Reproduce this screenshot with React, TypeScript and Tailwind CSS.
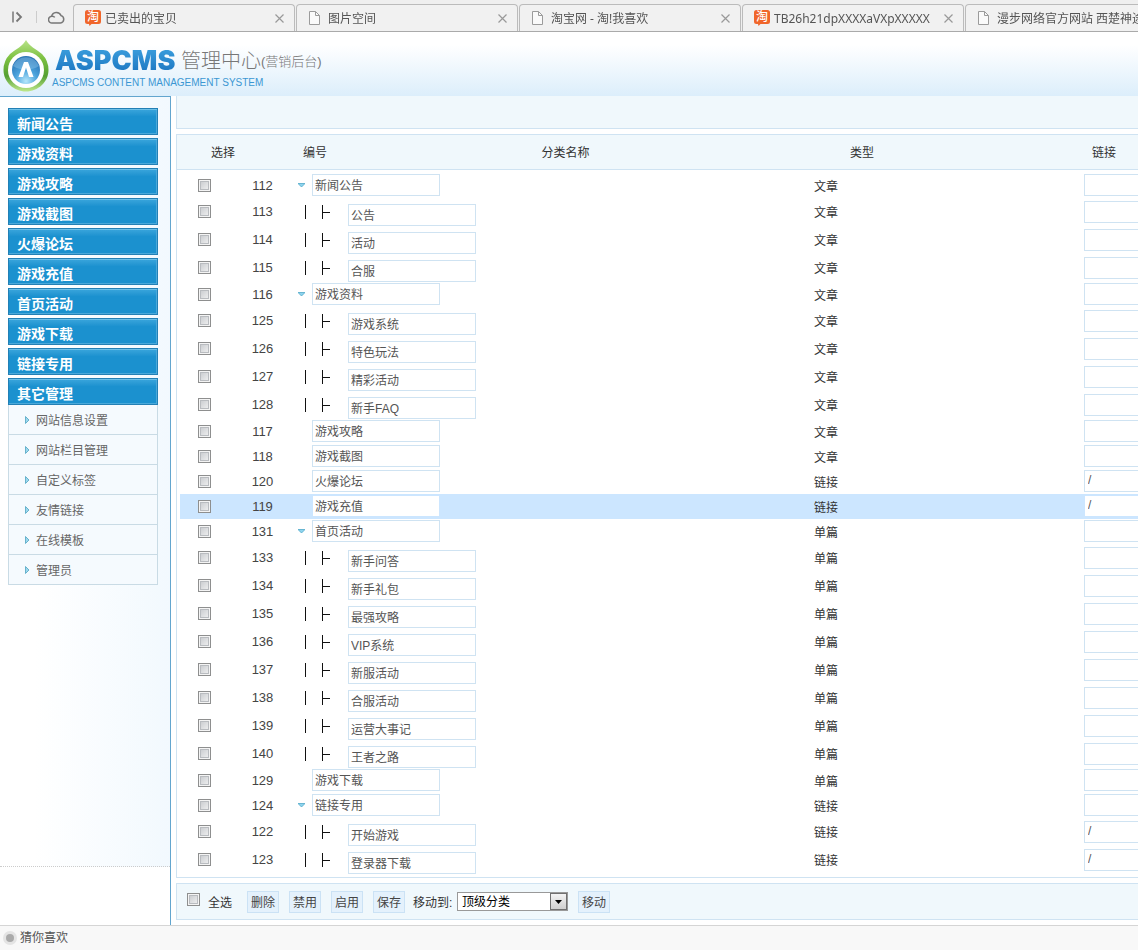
import clsx from "clsx";

interface ITab {
  title: string;
  icon: "tao" | "page";
}

interface ICategory {
  id: number;
  name: string;
  type: string;
  child?: boolean;
  open?: boolean;
  link?: string;
  active?: boolean;
}

const tabs: ITab[] = [
  { title: "已卖出的宝贝", icon: "tao" },
  { title: "图片空间", icon: "page" },
  { title: "淘宝网 - 淘!我喜欢", icon: "page" },
  { title: "TB26h21dpXXXXaVXpXXXXX", icon: "tao" },
  { title: "漫步网络官方网站 西楚神途", icon: "page" },
];

const menus = [
  "新闻公告",
  "游戏资料",
  "游戏攻略",
  "游戏截图",
  "火爆论坛",
  "游戏充值",
  "首页活动",
  "游戏下载",
  "链接专用",
  "其它管理",
];

const subMenus = [
  "网站信息设置",
  "网站栏目管理",
  "自定义标签",
  "友情链接",
  "在线模板",
  "管理员",
];

const categories: ICategory[] = [
  { id: 112, name: "新闻公告", type: "文章", open: true },
  { id: 113, name: "公告", type: "文章", child: true },
  { id: 114, name: "活动", type: "文章", child: true },
  { id: 115, name: "合服", type: "文章", child: true },
  { id: 116, name: "游戏资料", type: "文章", open: true },
  { id: 125, name: "游戏系统", type: "文章", child: true },
  { id: 126, name: "特色玩法", type: "文章", child: true },
  { id: 127, name: "精彩活动", type: "文章", child: true },
  { id: 128, name: "新手FAQ", type: "文章", child: true },
  { id: 117, name: "游戏攻略", type: "文章" },
  { id: 118, name: "游戏截图", type: "文章" },
  { id: 120, name: "火爆论坛", type: "链接", link: "/" },
  { id: 119, name: "游戏充值", type: "链接", link: "/", active: true },
  { id: 131, name: "首页活动", type: "单篇", open: true },
  { id: 133, name: "新手问答", type: "单篇", child: true },
  { id: 134, name: "新手礼包", type: "单篇", child: true },
  { id: 135, name: "最强攻略", type: "单篇", child: true },
  { id: 136, name: "VIP系统", type: "单篇", child: true },
  { id: 137, name: "新服活动", type: "单篇", child: true },
  { id: 138, name: "合服活动", type: "单篇", child: true },
  { id: 139, name: "运营大事记", type: "单篇", child: true },
  { id: 140, name: "王者之路", type: "单篇", child: true },
  { id: 129, name: "游戏下载", type: "单篇" },
  { id: 124, name: "链接专用", type: "链接", open: true },
  { id: 122, name: "开始游戏", type: "链接", child: true, link: "/" },
  { id: 123, name: "登录器下载", type: "链接", child: true, link: "/" },
];

function TaoIcon() {
  return (
    <span className="relative flex h-4 w-4 shrink-0 items-center justify-center">
      <svg className="absolute inset-0" width="16" height="16" viewBox="0 0 16 16">
        <path
          d="M2.500 0h11A2.500 2.500 0 0 1 16 2.500v9a2.500 2.500 0 0 1-2.500 2.500H6.500L4.500 16 4 14H2.500A2.500 2.500 0 0 1 0 11.500v-9A2.500 2.500 0 0 1 2.500 0z"
          fill="#f0662b"
        />
      </svg>
      <span className="relative -top-px text-[12px] leading-[14px] font-medium text-white">
        淘
      </span>
    </span>
  );
}

function PageIcon() {
  return (
    <svg className="mr-1 ml-px shrink-0" width="11" height="14" viewBox="0 0 11 14">
      <path d="M.5.5h6l4 4v9H.5z" fill="#fafafa" stroke="#9b9b9b" />
      <path d="M6.500.5v4h4" fill="none" stroke="#9b9b9b" />
    </svg>
  );
}

function BrowserTabs() {
  return (
    <nav
      aria-label="tabs"
      className="flex h-8 items-end overflow-hidden border-b border-[#aaa] bg-[#efefef] font-['Noto_Sans','Noto_Sans_CJK_SC',sans-serif]"
    >
      <div className="flex h-7 w-[73px] shrink-0 items-center pl-3">
        <button type="button" aria-label="展开">
          <svg width="11" height="12" viewBox="0 0 11 12" fill="none" stroke="#777">
            <path d="M1 .5v11" strokeWidth="1.500" />
            <path d="M4.500 1.500 9 6l-4.500 4.500" strokeWidth="1.800" />
          </svg>
        </button>
        <span className="ml-[13px] h-3 w-px bg-[#ccc]" />
        <button type="button" aria-label="云" className="ml-[11px]">
          <svg width="17" height="13" viewBox="0 0 17 13" fill="none" stroke="#777" strokeWidth="1.500">
            <path d="M4.200 12A3.300 3.300 0 0 1 3.600 5.300 4.900 4.900 0 0 1 13 4.600 3.800 3.800 0 0 1 12.500 12z" />
            <path d="M3.600 5.300c1.200-.3 2.400.1 3.200 1.100" />
          </svg>
        </button>
      </div>
      {tabs.map((tab) => (
        <div
          key={tab.title}
          className="mr-px flex h-[27px] w-[222px] shrink-0 items-center rounded-t border border-b-0 border-[#bbb] bg-[#f1f1f1] pr-[10px] pl-[11px]"
        >
          {tab.icon === "tao" ? <TaoIcon /> : <PageIcon />}
          <a
            href="#"
            className="ml-1 flex-1 overflow-hidden mask-r-from-94% pt-px text-[12px] leading-5 whitespace-nowrap text-[#555]"
          >
            {tab.title}
          </a>
          <button type="button" aria-label="关闭" className="ml-1">
            <svg width="9" height="9" viewBox="0 0 9 9" stroke="#999" strokeWidth="1.200">
              <path d="M.5.5l8 8M8.500.5l-8 8" />
            </svg>
          </button>
        </div>
      ))}
    </nav>
  );
}

function Logo() {
  return (
    <svg width="46" height="54" viewBox="0 0 46 54" aria-hidden="true">
      <defs>
        <linearGradient id="drop" x1="0" y1="0" x2="0" y2="1">
          <stop offset="0" stopColor="#b9e388" />
          <stop offset=".35" stopColor="#7cc142" />
          <stop offset=".7" stopColor="#55a033" />
          <stop offset="1" stopColor="#bfe88c" />
        </linearGradient>
        <radialGradient id="ball" cx=".5" cy=".9" r=".8">
          <stop offset="0" stopColor="#b4e6fb" />
          <stop offset=".5" stopColor="#4ba3dc" />
          <stop offset="1" stopColor="#2a75b6" />
        </radialGradient>
      </defs>
      <path
        d="M23 1C26 7 33 10 39 15A23 23 0 0 1 45.500 31C45.500 43 35 52.500 23 52.500S.5 43 .5 31A23 23 0 0 1 7 15C13 10 20 7 23 1z"
        fill="url(#drop)"
      />
      <circle cx="23" cy="31" r="18" fill="#fff" />
      <circle cx="23" cy="31" r="14" fill="url(#ball)" />
      <path d="M10 27a14 14 0 0 1 26 0c-8 5-18 5-26 0z" fill="#8cc6ec" opacity=".45" />
      <path d="M15.500 38 21 23h4l5.500 15h-4.500l-3-9.500-3 9.500z" fill="#fff" />
    </svg>
  );
}

function Banner() {
  return (
    <header className="flex h-16 bg-linear-to-b from-white from-20% to-[#dceefb] pt-[7px] pl-[3px]">
      <Logo />
      <div className="pt-[6px] pl-[3px]">
        <h1 className="flex h-[31px] items-center pl-[3px] leading-8 whitespace-nowrap">
          <span className="w-[126px] bg-linear-to-b from-[#3fa3e0] to-[#1670bd] bg-clip-text font-[Inter,sans-serif] text-[27px] leading-[32px] font-black text-transparent">
            ASPCMS
          </span>
          <span className="text-[20px] font-light text-[#777]">管理中心</span>
          <span className="pt-[3px] text-[13px] font-light text-[#777]">
            (营销后台)
          </span>
        </h1>
        <p className="text-[10px] leading-[14px] whitespace-nowrap text-[#3b97d3]">
          ASPCMS CONTENT MANAGEMENT SYSTEM
        </p>
      </div>
    </header>
  );
}

function Sidebar() {
  return (
    <aside className="w-[171px] shrink-0 border-t border-r border-[#62a5ce]">
      <div className="h-[770px] border-b border-dotted border-[#ccc] bg-linear-to-r from-white from-20% to-[#f2f9fe] pt-[11px] pl-2">
        <ul className="flex w-[150px] flex-col gap-[3px]">
          {menus.map((menu) => (
            <li key={menu}>
              <button
                type="button"
                className="block h-[27px] w-full border border-[#2380b5] bg-linear-to-b from-[#3aa6dc] to-[#1b91cf] to-30% pt-1 pl-2 text-left text-[14px] leading-5 font-bold text-white shadow-[inset_0_1px_0_#6cc0e8,inset_-1px_-1px_0_#4aa9da]"
              >
                {menu}
              </button>
            </li>
          ))}
        </ul>
        <ul className="w-[150px] border-x border-[#c9dbe5] bg-[#f5fafe]">
          {subMenus.map((item) => (
            <li key={item} className="h-[30px] border-b border-[#c9dbe5]">
              <a
                href="#"
                className="flex h-full items-center gap-[7px] pl-4 text-[12px] text-[#666]"
              >
                <svg width="4" height="8" viewBox="0 0 4 8">
                  <path d="M.5.5v7L4 4z" fill="#9bd8ee" stroke="#4fa3c2" strokeWidth=".8" />
                </svg>
                <span className="pt-[2px]">{item}</span>
              </a>
            </li>
          ))}
        </ul>
      </div>
    </aside>
  );
}

function Check({ label, id }: { label?: string; id?: string }) {
  return (
    <input
      type="checkbox"
      id={id}
      aria-label={label}
      className="block h-[13px] w-[13px] shrink-0 appearance-none border border-[#8e8f8f] bg-linear-to-br from-[#c3c6ca] to-[#f6f6f6] shadow-[inset_0_0_0_1px_#f4f4f4,inset_0_0_0_2px_#b9bcc0] checked:bg-[#4a90c4]"
    />
  );
}

function CategoryRow({ category }: { category: ICategory }) {
  const { id, name, type, child, open, link, active } = category;
  const border = active ? "border-[#cce6ff]" : "border-[#cfe3f2]";

  return (
    <tr
      className={clsx(
        "hover:bg-[#cce6ff]",
        child ? "h-[28px]" : "h-[25px]",
        active && "bg-[#cce6ff]",
      )}
    >
      <td className={clsx("pl-[18px] align-top", child ? "pt-[7px]" : "pt-[6px]")}>
        <Check label={`选择 ${id}`} />
      </td>
      <td className="text-center text-[13px] leading-5 text-[#444]">{id}</td>
      <td className="align-top">
        <div className={clsx("flex", child ? "h-[28px]" : "h-[25px]")}>
          {child ? (
            <svg className="mt-[7px] mr-[18px] ml-2" width="25" height="14" viewBox="0 0 25 14" stroke="#111">
              <path d="M.5 0v14M17.500 0v14M17.500 7.500h7.500" />
            </svg>
          ) : (
            <span className="w-[15px] pt-[10px] pl-px">
              {open && (
                <svg width="7" height="4" viewBox="0 0 7 4">
                  <path d="M0 .5h7L3.500 4z" fill="#8fd4ee" stroke="#4fa8c9" strokeWidth=".8" />
                </svg>
              )}
            </span>
          )}
          <input
            type="text"
            aria-label={`分类名称 ${id}`}
            defaultValue={name}
            className={clsx(
              "h-[22px] w-[128px] border bg-white px-[2px] pb-[2px] text-[12px] text-[#555]",
              child ? "mt-[6px]" : "mt-px",
              border,
            )}
          />
        </div>
      </td>
      <td className="pt-[2px] text-[12px] leading-5 text-[#333]">{type}</td>
      <td className={clsx("align-top", child ? "pt-[3px]" : "pt-px")}>
        <input
          type="text"
          aria-label={`链接 ${id}`}
          defaultValue={link}
          className={clsx(
            "block h-[22px] w-[200px] border bg-white px-[3px] pb-[2px] text-[12px] text-[#555]",
            border,
          )}
        />
      </td>
    </tr>
  );
}

function ActionButton({ label }: { label: string }) {
  return (
    <button
      type="button"
      className="h-[22px] w-8 border border-[#cbe2f5] bg-[#e4f1fc] pt-px text-[12px] leading-5 text-[#444]"
    >
      {label}
    </button>
  );
}

function ActionBar() {
  return (
    <div className="mt-[5px] flex h-[37px] items-center border border-r-0 border-[#cfe3f2] bg-[#f0f8fc] pl-[10px] text-[12px] text-[#333]">
      <div className="-mt-1">
        <Check id="check-all" />
      </div>
      <label htmlFor="check-all" className="ml-2 w-[39px] pt-[2px]">
        全选
      </label>
      <div className="flex gap-[10px]">
        <ActionButton label="删除" />
        <ActionButton label="禁用" />
        <ActionButton label="启用" />
        <ActionButton label="保存" />
      </div>
      <label htmlFor="move-to" className="ml-2 w-11 pt-[2px] whitespace-nowrap">
        移动到:
      </label>
      <div className="relative mr-[10px]">
        <select
          id="move-to"
          className="block h-[19px] w-[111px] appearance-none border border-[#999] bg-white pt-px pl-1 text-[12px] leading-4 text-black"
        >
          <option>顶级分类</option>
        </select>
        <span className="pointer-events-none absolute top-px right-px flex h-[17px] w-[17px] items-center justify-center border border-[#707070] bg-linear-to-b from-[#f4f4f4] to-[#cfcfcf]">
          <svg width="7" height="4" viewBox="0 0 7 4">
            <path d="M0 0h7L3.500 4z" fill="#000" />
          </svg>
        </span>
      </div>
      <ActionButton label="移动" />
    </div>
  );
}

export default function App() {
  return (
    <div className="flex min-h-screen flex-col bg-white font-['Liberation_Sans','Noto_Sans_CJK_SC',sans-serif]">
      <BrowserTabs />
      <Banner />
      <div className="flex">
        <Sidebar />
        <main className="min-w-0 flex-1 overflow-hidden pb-[5px] pl-[5px]">
          <div className="h-[33px] border-b border-l border-[#cfe3f2] bg-[#f0f8fc]" />

          <section className="mt-[5px] border border-r-0 border-[#cfe3f2]">
            <div className="flex h-[35px] items-center border-b border-[#cfe3f2] bg-[#f0f8fc] pt-[2px] text-[12px] text-[#333]">
              <span className="w-[92px] text-center">选择</span>
              <span className="w-[92px] text-center">编号</span>
              <span className="flex-1 pl-[22px] text-center">分类名称</span>
              <span className="w-[210px] pl-[102px]">类型</span>
              <span className="w-[180px] pl-[134px]">链接</span>
            </div>
            <div className="py-[3px] pl-[3px]">
              <table className="w-full table-fixed border-collapse">
                <colgroup>
                  <col className="w-12" />
                  <col className="w-[69px]" />
                  <col />
                  <col className="w-[270px]" />
                  <col className="w-[54px]" />
                </colgroup>
                <tbody>
                  {categories.map((category) => (
                    <CategoryRow key={category.id} category={category} />
                  ))}
                </tbody>
              </table>
            </div>
          </section>

          <ActionBar />
        </main>
      </div>
      <footer className="flex h-[25px] items-center gap-[3px] border-t border-[#d5d5d5] bg-[#f8f8f8] pl-[3px] text-[12px] text-[#555]">
        <svg width="14" height="14" viewBox="0 0 14 14">
          <circle cx="7" cy="7" r="7" fill="#e4e4e4" />
          <circle cx="7" cy="7" r="4" fill="#aaa" />
        </svg>
        <a href="#">猜你喜欢</a>
      </footer>
    </div>
  );
}
